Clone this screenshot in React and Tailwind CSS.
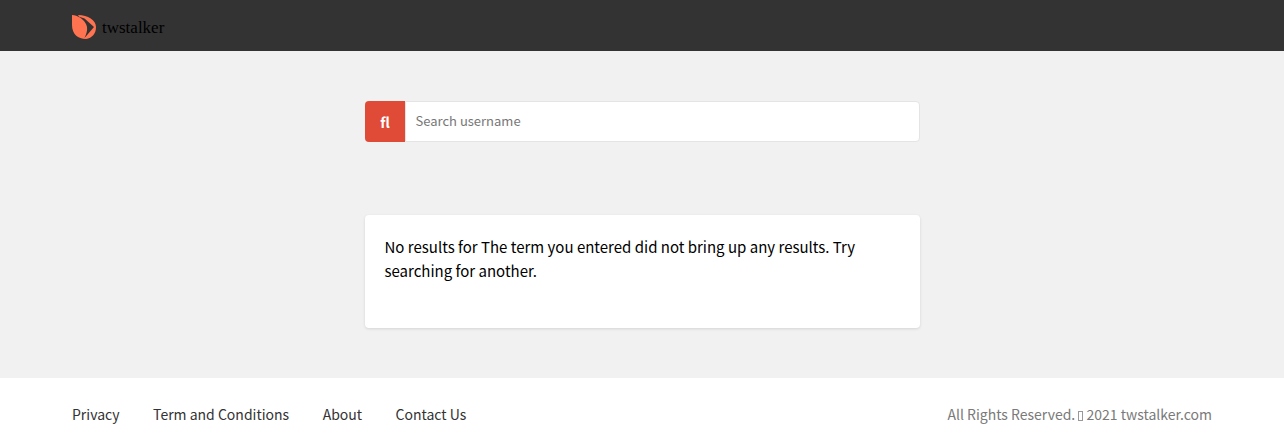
import React from "react";

const sans = "font-['Noto_Sans_CJK_JP','Noto_Sans',sans-serif]";

const Logo = () => (
  <svg className="mt-[3px]" width="24" height="26" viewBox="0 0 24 26">
    <path d="M0 1 C3 1 5.500 2 7.500 3.500 L6 1 C16 1 24 6 24 13 C24 20 20 24 14 25 C6 25 0 20 0 11 Z" fill="#ff7350" />
    <path d="M6.500 2.500 L12.500 4.500 L22 13 L12.500 24 C14.500 20 15.500 16.500 15 13 C14.500 9.500 11.500 5.500 6.500 2.500 Z" fill="#333333" />
  </svg>
);

const App = () => {
  return (
    <div className={`${sans} min-h-screen bg-[#f1f1f1] flex flex-col`}>
      <header className="h-[51px] bg-[#333333] px-[72px] flex items-center">
        <Logo />
        <span className="ml-1.5 mt-1 font-['Liberation_Serif',serif] text-[17px] text-black leading-none">twstalker</span>
      </header>

      <main className="w-[555px] ml-[365px] pt-[50px] pb-[50px]">
        <div className="flex h-[41px]">
          <div className="w-10 bg-[#e04b38] rounded-l flex items-center justify-center text-white font-bold text-sm">fl</div>
          <input
            className="flex-1 bg-white border border-[#e4e4e4] rounded-r pl-[9.5px] pr-2.5 pb-0.5 text-[13px] text-black placeholder:text-[#777777] outline-none"
            placeholder="Search username"
          />
        </div>
        <div className="mt-[73px] h-[113px] bg-white rounded shadow-[0_1px_3px_rgba(0,0,0,0.12)] pl-[19.5px] pr-5 pt-[20px] text-[15px] leading-6 text-black">
          No results for The term you entered did not bring up any results. Try searching for another.
        </div>
      </main>

      <footer className="flex-1 bg-white px-[72px] pt-6 pb-6 flex justify-between text-sm leading-6">
        <nav className="flex gap-[33.5px] text-[#333333]">
          <a href="#">Privacy</a>
          <a href="#">Term and Conditions</a>
          <a href="#">About</a>
          <a href="#">Contact Us</a>
        </nav>
        <div className="text-[#7a7a7a]">
          All Rights Reserved. <span className="inline-block w-[5px] h-[10px] border border-[#999999] align-[-1px]"></span> 2021 twstalker.com
        </div>
      </footer>
    </div>
  );
};

export default App;
